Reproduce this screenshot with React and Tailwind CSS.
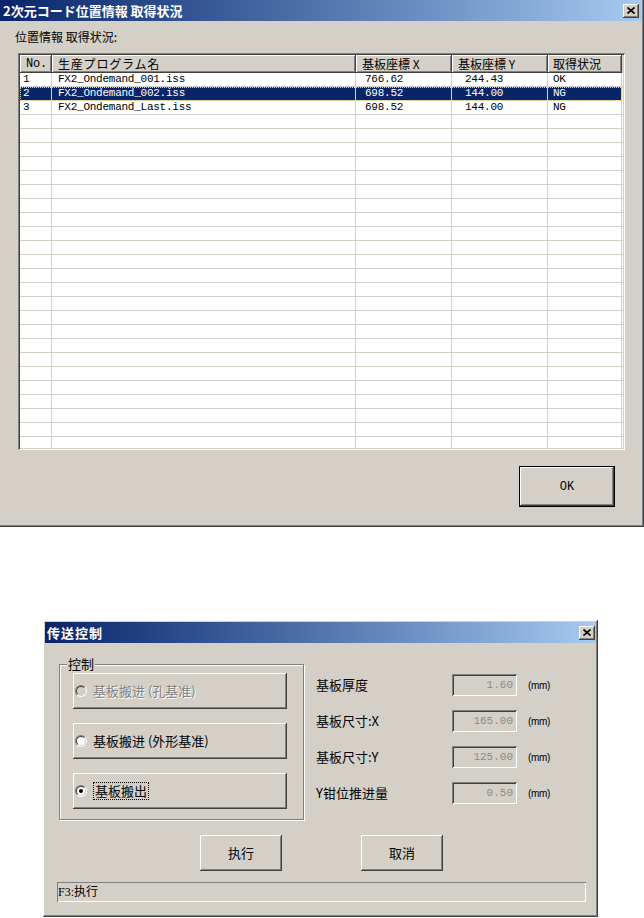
import React from "react";

const raised =
  "shadow-[inset_-1px_-1px_#404040,inset_1px_1px_#ffffff,inset_-2px_-2px_#808080,inset_2px_2px_#d4d0c8]";
const sunken =
  "shadow-[inset_1px_1px_#808080,inset_-1px_-1px_#ffffff,inset_2px_2px_#404040,inset_-2px_-2px_#d4d0c8]";

function CloseBtn() {
  return (
    <div className={`w-[16px] h-[14px] bg-[#d4d0c8] flex items-center justify-center ${raised}`}>
      <svg width="8" height="7" viewBox="0 0 8 7">
        <path d="M0.5 0.5 L7.5 6.5 M7.5 0.5 L0.5 6.5" stroke="#000" strokeWidth="1.7" />
      </svg>
    </div>
  );
}

function Radio({ checked, disabled }) {
  return (
    <div className="w-[12px] h-[12px] rounded-full border border-t-[#808080] border-l-[#808080] border-r-white border-b-white shrink-0">
      <div
        className={`w-full h-full rounded-full border border-t-[#404040] border-l-[#404040] border-r-[#d4d0c8] border-b-[#d4d0c8] flex items-center justify-center ${
          disabled ? "bg-[#d4d0c8]" : "bg-white"
        }`}
      >
        {checked && <div className="w-[4px] h-[4px] rounded-full bg-black" />}
      </div>
    </div>
  );
}

const rows = [
  ["1", "FX2_Ondemand_001.iss", "766.62", "244.43", "OK"],
  ["2", "FX2_Ondemand_002.iss", "698.52", "144.00", "NG"],
  ["3", "FX2_Ondemand_Last.iss", "698.52", "144.00", "NG"],
];
const emptyRows = Array.from({ length: 25 }, () => ["", "", "", "", ""]);

const jp = "font-['Noto_Sans_CJK_JP',sans-serif]";
const mono = "font-['Liberation_Mono','Noto_Sans_CJK_JP',monospace]";
const sc = "font-['Noto_Sans_CJK_SC',sans-serif]";

function TopDialog() {
  const all = [...rows, ...emptyRows];
  return (
    <div className="w-[644px] h-[527px] bg-[#d4d0c8] flex flex-col shadow-[inset_-1px_-1px_#404040,inset_-2px_-2px_#808080]">
      <div className="h-[21px] mr-[2px] bg-linear-to-r from-[#0a246a] to-[#a6caf0] flex items-center justify-between pl-[3px] pr-[3px]">
        <span className={`text-white font-bold text-[13px] leading-[16px] ${jp}`}>
          2次元コード位置情報 取得状況
        </span>
        <CloseBtn />
      </div>
      <div className={`mt-[8px] pl-[15px] h-[16px] text-[12px] leading-[16px] text-black ${jp}`}>
        位置情報 取得状況:
      </div>
      <div className={`mt-[8px] ml-[18px] w-[607px] h-[397px] bg-white p-[2px] ${sunken}`}>
        <div className="w-full h-full overflow-hidden flex flex-col">
          <div className={`flex h-[18px] shrink-0 bg-[#d4d0c8] text-[12px] leading-[18px] text-black ${jp}`}>
            <div className={`w-[32px] pl-[6px] ${raised} ${mono} tracking-[-0.2px]`}>No.</div>
            <div className={`w-[304px] pl-[6px] tracking-[0.8px] ${raised}`}>生産プログラム名</div>
            <div className={`w-[96px] pl-[6px] ${raised}`}>基板座標 X</div>
            <div className={`w-[96px] pl-[6px] ${raised}`}>基板座標 Y</div>
            <div className={`w-[74px] pl-[5px] ${raised}`}>取得状況</div>
            <div className="flex-1" />
          </div>
          {all.map((r, i) => {
            const sel = i === 1;
            return (
              <div
                key={i}
                className={`flex h-[14px] shrink-0 text-[11px] leading-[13px] tracking-[-0.25px] ${mono} ${
                  sel
                    ? "bg-[#0a246a] text-white outline-1 outline-dotted outline-[#d8d8a0] -outline-offset-1"
                    : "bg-white text-black"
                }`}
              >
                <div className="w-[32px] pl-[3px] border-r border-b border-[#d4d0c8]">{r[0]}</div>
                <div className="w-[304px] pl-[6px] border-r border-b border-[#d4d0c8]">{r[1]}</div>
                <div className="w-[96px] pl-[9px] border-r border-b border-[#d4d0c8]">{r[2]}</div>
                <div className="w-[96px] pl-[13px] border-r border-b border-[#d4d0c8]">{r[3]}</div>
                <div className="w-[74px] pl-[5px] border-r border-b border-[#d4d0c8]">{r[4]}</div>
                <div className="flex-1 bg-white border-b border-[#d4d0c8]" />
              </div>
            );
          })}
        </div>
      </div>
      <div className="mt-[16px] mr-[29px] self-end w-[96px] h-[41px] border border-black">
        <div className={`w-full h-full flex items-center justify-center text-[12px] text-black ${mono} ${raised}`}>
          OK
        </div>
      </div>
    </div>
  );
}

function Field({ label, value }) {
  return (
    <div className="flex items-center h-[22px]">
      <div className={`w-[136px] text-[13px] text-black ${sc}`}>{label}</div>
      <div
        className={`w-[65px] h-[22px] bg-[#d4d0c8] flex items-center justify-end pr-[4px] text-[11px] text-[#8a8a8a] ${mono} ${sunken}`}
      >
        {value}
      </div>
      <div className="ml-[11px] text-[10px] font-['Liberation_Sans',sans-serif] text-black tracking-[-0.3px]">
        (mm)
      </div>
    </div>
  );
}

function RadioBtn({ children, checked, disabled, focus }) {
  return (
    <div className={`w-[214px] h-[36px] bg-[#d4d0c8] flex items-center pl-[2px] ${raised}`}>
      <Radio checked={checked} disabled={disabled} />
      <div
        className={`ml-[6px] text-[13px] leading-[16px] ${sc} ${
          disabled ? "text-[#808080] [text-shadow:1px_1px_#ffffff]" : "text-black"
        } ${focus ? "border border-dotted border-black px-[1px]" : ""}`}
      >
        {children}
      </div>
    </div>
  );
}

function BottomDialog() {
  return (
    <div className={`ml-[43px] mt-[93px] w-[555px] h-[297px] bg-[#d4d0c8] p-[2px] flex flex-col ${raised}`}>
      <div className="h-[21px] bg-linear-to-r from-[#0a246a] to-[#a6caf0] flex items-center justify-between pl-[2px] pr-[1px]">
        <span className={`text-white font-bold text-[13px] leading-[16px] tracking-[1px] ${sc}`}>传送控制</span>
        <CloseBtn />
      </div>
      <div className="flex mt-[21px] ml-[14px]">
        <div className="relative w-[245px] h-[156px] border border-[#808080] shadow-[inset_1px_1px_#ffffff,1px_1px_#ffffff] flex flex-col gap-[14px] pt-[8px] pl-[13px]">
          <div className={`absolute -top-[9px] left-[7px] px-[1px] bg-[#d4d0c8] text-[13px] leading-[16px] text-black ${sc}`}>
            控制
          </div>
          <RadioBtn disabled>基板搬进 (孔基准)</RadioBtn>
          <RadioBtn>基板搬进 (外形基准)</RadioBtn>
          <RadioBtn checked focus>基板搬出</RadioBtn>
        </div>
        <div className="ml-[12px] mt-[10px] flex flex-col gap-[14px]">
          <Field label="基板厚度" value="1.60" />
          <Field label="基板尺寸:X" value="165.00" />
          <Field label="基板尺寸:Y" value="125.00" />
          <Field label="Y钳位推进量" value="0.50" />
        </div>
      </div>
      <div className="flex mt-[15px] ml-[155px] gap-[79px]">
        <div className={`w-[82px] h-[36px] flex items-center justify-center text-[13px] text-black ${sc} ${raised}`}>
          执行
        </div>
        <div className={`w-[82px] h-[36px] flex items-center justify-center text-[13px] text-black ${sc} ${raised}`}>
          取消
        </div>
      </div>
      <div
        className={`mt-[11px] ml-[12px] w-[529px] h-[20px] flex items-center pl-[1px] text-[12px] text-black font-['Liberation_Serif','Noto_Sans_CJK_SC',serif] shadow-[inset_1px_1px_#808080,inset_-1px_-1px_#ffffff]`}
      >
        F3:执行
      </div>
    </div>
  );
}

export default function App() {
  return (
    <div className="w-[644px] h-[918px] bg-white overflow-hidden flex flex-col">
      <TopDialog />
      <BottomDialog />
    </div>
  );
}
